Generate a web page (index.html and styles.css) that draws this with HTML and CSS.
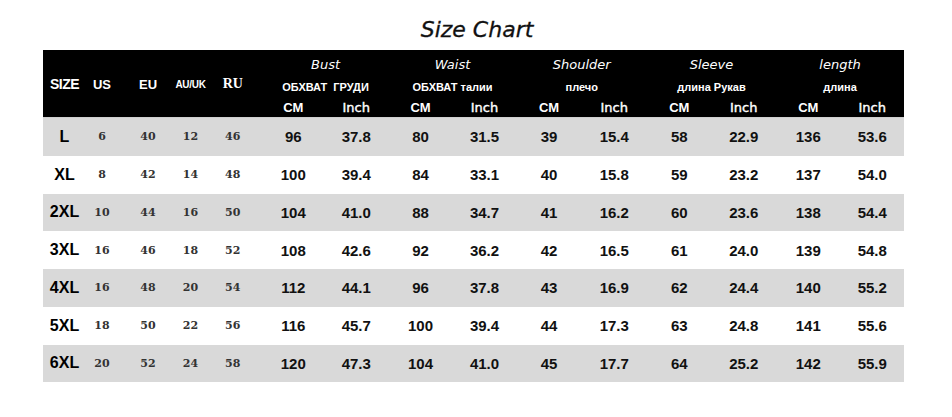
FILE: index.html
```html
<!DOCTYPE html>
<html>
<head>
<meta charset="utf-8">
<link rel="stylesheet" href="styles.css">
</head>
<body>
<div class="page">
  <h1 class="title">Size Chart</h1>
  <div class="chart">
    <div class="head">
      <div class="hl c1 big">SIZE</div>
      <div class="hl c2">US</div>
      <div class="hl c3">EU</div>
      <div class="hl c4 tiny">AU/UK</div>
      <div class="hl c5 ru">RU</div>
      <div class="grp g1">Bust</div>
      <div class="grp g2">Waist</div>
      <div class="grp g3">Shoulder</div>
      <div class="grp g4">Sleeve</div>
      <div class="grp g5">length</div>
      <div class="rus g1">ОБХВАТ&nbsp; ГРУДИ</div>
      <div class="rus g2">ОБХВАТ талии</div>
      <div class="rus g3">плечо</div>
      <div class="rus g4">длина Рукав</div>
      <div class="rus g5">длина</div>
      <div class="unit u6">CM</div><div class="unit u7 inch">Inch</div>
      <div class="unit u8">CM</div><div class="unit u9 inch">Inch</div>
      <div class="unit u10">CM</div><div class="unit u11 inch">Inch</div>
      <div class="unit u12">CM</div><div class="unit u13 inch">Inch</div>
      <div class="unit u14">CM</div><div class="unit u15 inch">Inch</div>
    </div>
    <div class="row gray"><div class="sz">L</div><div class="sm">6</div><div class="sm">40</div><div class="sm">12</div><div class="sm">46</div><div>96</div><div>37.8</div><div>80</div><div>31.5</div><div>39</div><div>15.4</div><div>58</div><div>22.9</div><div>136</div><div>53.6</div></div>
    <div class="row"><div class="sz">XL</div><div class="sm">8</div><div class="sm">42</div><div class="sm">14</div><div class="sm">48</div><div>100</div><div>39.4</div><div>84</div><div>33.1</div><div>40</div><div>15.8</div><div>59</div><div>23.2</div><div>137</div><div>54.0</div></div>
    <div class="row gray"><div class="sz">2XL</div><div class="sm">10</div><div class="sm">44</div><div class="sm">16</div><div class="sm">50</div><div>104</div><div>41.0</div><div>88</div><div>34.7</div><div>41</div><div>16.2</div><div>60</div><div>23.6</div><div>138</div><div>54.4</div></div>
    <div class="row"><div class="sz">3XL</div><div class="sm">16</div><div class="sm">46</div><div class="sm">18</div><div class="sm">52</div><div>108</div><div>42.6</div><div>92</div><div>36.2</div><div>42</div><div>16.5</div><div>61</div><div>24.0</div><div>139</div><div>54.8</div></div>
    <div class="row gray"><div class="sz">4XL</div><div class="sm">16</div><div class="sm">48</div><div class="sm">20</div><div class="sm">54</div><div>112</div><div>44.1</div><div>96</div><div>37.8</div><div>43</div><div>16.9</div><div>62</div><div>24.4</div><div>140</div><div>55.2</div></div>
    <div class="row"><div class="sz">5XL</div><div class="sm">18</div><div class="sm">50</div><div class="sm">22</div><div class="sm">56</div><div>116</div><div>45.7</div><div>100</div><div>39.4</div><div>44</div><div>17.3</div><div>63</div><div>24.8</div><div>141</div><div>55.6</div></div>
    <div class="row gray"><div class="sz">6XL</div><div class="sm">20</div><div class="sm">52</div><div class="sm">24</div><div class="sm">58</div><div>120</div><div>47.3</div><div>104</div><div>41.0</div><div>45</div><div>17.7</div><div>64</div><div>25.2</div><div>142</div><div>55.9</div></div>
  </div>
</div>
</body>
</html>
```
FILE: styles.css
```css
html, body {
  margin: 0;
  padding: 0;
  background: #ffffff;
}

.page {
  width: 952px;
  height: 417px;
  overflow: hidden;
}

.title {
  margin: 15px 0 5px 0;
  height: 30px;
  line-height: 30px;
  text-align: center;
  font-family: "DejaVu Sans", sans-serif;
  font-style: italic;
  font-weight: normal;
  font-size: 22px;
  color: #111;
  -webkit-text-stroke: 0.3px #111;
  padding-left: 2px;
}

.chart {
  margin-left: 43px;
  width: 861px;
  font-family: "Liberation Sans", Arial, sans-serif;
}

.head,
.row {
  display: grid;
  grid-template-columns: 43px 32px 60px 25px 59.5px 61.5px 64.5px 64px 64px 65px 65.5px 64.5px 64.5px 64.5px 63.5px;
}

.head {
  background: #000;
  color: #fff;
  grid-template-rows: 26px 22px 19px;
  border-bottom: 1px solid #cfcfcf;
  box-sizing: border-box;
  height: 68px;
}

.head > div {
  display: flex;
  align-items: center;
  justify-content: center;
  white-space: nowrap;
}

.hl {
  grid-row: 1 / 4;
  font-weight: bold;
  font-size: 13px;
  padding-top: 1px;
}

.hl.big { font-size: 14px; letter-spacing: -0.5px; }
.hl.tiny { font-size: 10px; letter-spacing: -0.3px; }
.hl.ru { font-family: "Liberation Serif", serif; font-size: 14px; }

.c1 { grid-column: 1; }
.c2 { grid-column: 2; }
.c3 { grid-column: 3; }
.c4 { grid-column: 4; }
.c5 { grid-column: 5; }

.grp {
  grid-row: 1;
  font-family: "DejaVu Sans", sans-serif;
  font-style: italic;
  font-size: 13px;
  padding-top: 2px;
}

.rus {
  grid-row: 2;
  font-weight: bold;
  font-size: 11px;
}

.g1 { grid-column: 6 / 8; }
.g2 { grid-column: 8 / 10; }
.g3 { grid-column: 10 / 12; }
.g4 { grid-column: 12 / 14; }
.g5 { grid-column: 14 / 16; }

.unit {
  grid-row: 3;
  font-weight: bold;
  font-size: 13px;
}

.unit.inch { font-family: "DejaVu Sans", sans-serif; font-size: 13px; font-weight: normal; -webkit-text-stroke: 0.4px #fff; }

.u6 { grid-column: 6; }
.u7 { grid-column: 7; }
.u8 { grid-column: 8; }
.u9 { grid-column: 9; }
.u10 { grid-column: 10; }
.u11 { grid-column: 11; }
.u12 { grid-column: 12; }
.u13 { grid-column: 13; }
.u14 { grid-column: 14; }
.u15 { grid-column: 15; }

.row {
  height: 37.75px;
  background: #ffffff;
  color: #111;
  font-weight: bold;
  font-size: 15px;
}

.row.gray {
  background: #d9d9d9;
}

.row > div {
  display: flex;
  align-items: center;
  justify-content: center;
  white-space: nowrap;
}

.row .sz {
  font-size: 16px;
  color: #000;
}

.row .sm {
  font-family: "DejaVu Serif", serif;
  font-size: 11px;
  color: #333;
}
```
